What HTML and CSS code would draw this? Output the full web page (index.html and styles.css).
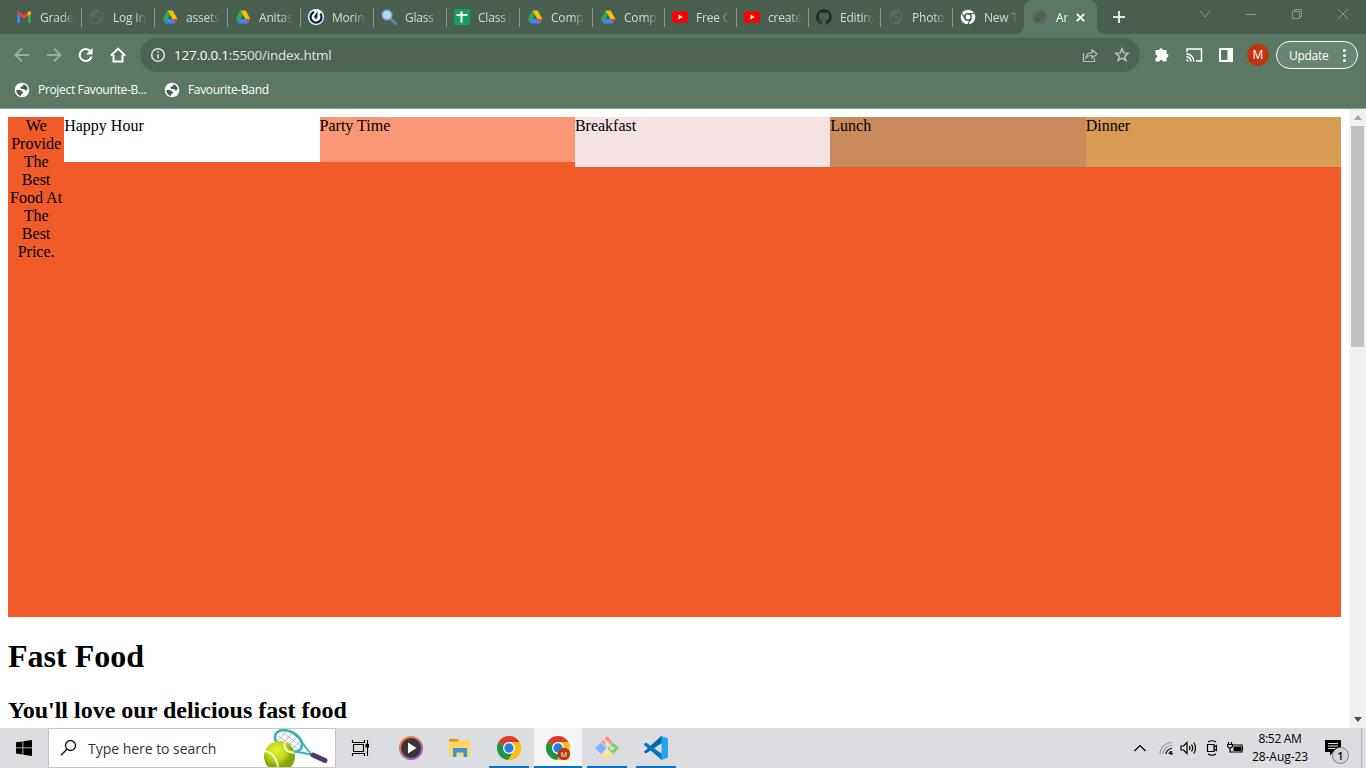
FILE: index.html
```html
<!DOCTYPE html>
<html lang="en">
<head>
<meta charset="utf-8">
<title>Anitas Restaurant</title>
<link rel="stylesheet" href="styles.css">
</head>
<body>
<svg class="defs" aria-hidden="true">
  <symbol id="globe" viewBox="0 0 16 16"><circle cx="8" cy="8" r="7.300" fill="currentColor"/><path class="land" d="M2.200 8 5.800 8Q7.400 8.200 8 9.500 9.300 9.700 9 11 8.600 12 7.200 12L7 13.900Q2.600 13 2.200 8zM9.600 2.300Q12.900 3.400 13.700 7 12.500 9 11 8.300 10.800 7 8.800 7 6.400 7.200 6.400 5.500 6.600 4.300 8.700 4.200z"/></symbol>
  <symbol id="drive" viewBox="0 0 16 16"><path fill="#fbbc04" d="M5.300 1.500h5.400L15.400 10h-5z"/><path fill="#2da94f" d="M5.300 1.500 8 6.400 5.900 10 3.400 14 .8 10z"/><path class="gap" d="M8 6.400 10.100 10H5.900z"/><path fill="#4285f4" d="M3.400 14.500 5.900 10h9.500l-2.600 4.500z"/><path fill="#4285f4" d="M5.900 10 3.400 14.500 2.500 13 4.300 10z"/><path fill="#ea4335" d="M11.700 10h3.600l-2.500 4.500z"/></symbol>
  <symbol id="youtube" viewBox="0 0 16 16"><rect y="2.500" width="16" height="11" rx="2" fill="#f00"/><path fill="#fff" d="m6.400 5.500 4.200 2.500-4.200 2.500z"/></symbol>
  <symbol id="chrome" viewBox="0 0 24 24"><circle cx="12" cy="12" r="12" fill="#fbc116"/><path fill="#1e9447" d="M12 12 1.600 6A12 12 0 0 0 11 24l6-9z"/><path fill="#dd3b30" d="M12 12 1.600 6a12 12 0 0 1 20.800 0H12z"/><path fill="#fbc116" d="M22.400 6A12 12 0 0 1 11 24l6-9-5-9z"/><circle cx="12" cy="12" r="6" fill="#fff"/><circle cx="12" cy="12" r="4.700" fill="#2b7ce9"/></symbol>
</svg>
<div class="browser">
  <header class="tabstrip">
    <div class="tab"><svg class="fav" viewBox="0 0 16 16"><path fill="#4285f4" d="M1 4.500 4 6.800V14H2q-1 0-1-1z"/><path fill="#34a853" d="M12 6.800 15 4.500V13q0 1-1 1h-2z"/><path fill="#ea4335" d="M1 4.400Q1 2.200 3 2.300L8 6l5-3.700L12 6.800 8 10 4 6.800z"/><path fill="#fbbc04" d="M12 3q3-1.800 3 1.200v.6l-3 2.400z"/></svg><span>Grade</span></div>
    <div class="tab dim"><svg class="fav"><use href="#globe"/></svg><span>Log In</span></div>
    <div class="tab"><svg class="fav"><use href="#drive"/></svg><span>assets</span></div>
    <div class="tab"><svg class="fav"><use href="#drive"/></svg><span>Anitas</span></div>
    <div class="tab"><svg class="fav" viewBox="0 0 16 16"><circle cx="8" cy="8" r="8" fill="#fff"/><path fill="none" stroke="#12264f" stroke-width="2.400" d="M6.200 2.900A5.500 5.500 0 1 0 12.300 4.600"/><path fill="#12264f" d="M9.500 2v6.200q-.4 1.800-2 1.500-1.500-.5-1.200-2.400z"/></svg><span>Morin</span></div>
    <div class="tab"><svg class="fav" viewBox="0 0 16 16"><path d="m9.500 9.500 5 5" stroke="#71839b" stroke-width="3" stroke-linecap="round"/><circle cx="6" cy="6" r="5" fill="#add8f7" stroke="#7d98b8" stroke-width="1.300"/></svg><span>Glass F</span></div>
    <div class="tab"><svg class="fav" viewBox="0 0 16 16"><rect width="16" height="16" rx="1" fill="#12a05c"/><path d="M2.500 6h11M7.500 2.500v11" stroke="#fff" stroke-width="2"/></svg><span>Class R</span></div>
    <div class="tab"><svg class="fav"><use href="#drive"/></svg><span>Comp</span></div>
    <div class="tab narrow"><svg class="fav"><use href="#drive"/></svg><span>Comp</span></div>
    <div class="tab narrow"><svg class="fav"><use href="#youtube"/></svg><span>Free C</span></div>
    <div class="tab narrow"><svg class="fav"><use href="#youtube"/></svg><span>create</span></div>
    <div class="tab narrow"><svg class="fav" viewBox="0 0 16 16"><path fill="#24292f" d="M8 0a8 8 0 0 0-2.500 15.600c.4.100.5-.2.500-.4v-1.500c-2.200.5-2.700-1-2.700-1-.4-.9-.9-1.200-.9-1.200-.7-.5.100-.5.100-.5.800.100 1.200.8 1.200.8.700 1.300 1.900.9 2.300.7.100-.5.300-.9.500-1.100-1.800-.2-3.600-.9-3.600-4 0-.9.300-1.600.8-2.100-.1-.2-.4-1 .1-2.100 0 0 .7-.2 2.200.8a7.500 7.500 0 0 1 4 0c1.500-1 2.200-.8 2.200-.8.400 1.100.200 1.900.100 2.100.500.500.800 1.200.800 2.100 0 3.100-1.900 3.700-3.700 3.900.300.300.600.800.600 1.500v2.300c0 .200.100.500.600.400A8 8 0 0 0 8 0z"/></svg><span>Editing</span></div>
    <div class="tab narrow dim"><svg class="fav"><use href="#globe"/></svg><span>Photo</span></div>
    <div class="tab narrow last"><svg class="fav" viewBox="0 0 16 16"><circle cx="8" cy="8" r="7.300" fill="#fff"/><circle cx="8" cy="8" r="3.200" fill="none" stroke="#485f4f" stroke-width="1.500"/><path d="M8 4.600h6.400M5 9.800 1.800 4.200M11 9.800 8 15.300" stroke="#485f4f" stroke-width="1.300"/></svg><span>New T</span></div>
    <div class="tab active dim"><svg class="fav"><use href="#globe"/></svg><span>An</span><svg class="close" viewBox="0 0 9 9"><path d="m.8.800 7.400 7.400m0-7.400L.800 8.200"/></svg></div>
    <svg class="newtab" viewBox="0 0 12 12"><path d="M6 0v12M0 6h12"/></svg>
    <div class="winctl">
      <svg viewBox="0 0 12 12"><path d="m1 3 5 6 5-6"/></svg>
      <svg viewBox="0 0 12 12"><path d="M1 6.500h10"/></svg>
      <svg viewBox="0 0 12 12"><path d="M1.500 3.500h7v7h-7zM3.500 3.500v-2h7v7h-2"/></svg>
      <svg viewBox="0 0 12 12"><path d="m1 1 10 10m0-10L1 11"/></svg>
    </div>
  </header>
  <div class="toolbar">
    <svg class="nav off" viewBox="0 0 16 16"><path d="M15 8H2m6-6.500L1.500 8 8 14.500"/></svg>
    <svg class="nav off" viewBox="0 0 16 16"><path d="M1 8h13M8 1.500 14.500 8 8 14.500"/></svg>
    <svg class="nav" viewBox="0 0 16 16"><path class="bold" d="M12.300 4.200A6 6 0 1 0 13.500 9.500"/><path fill="#fff" stroke="none" d="M14.500 1v6.500H8z"/></svg>
    <svg class="nav" viewBox="0 0 16 16"><path class="bold" d="M3.500 8v6.500h9V8M.8 8.800 8 1.600l7.200 7.200"/></svg>
    <div class="omnibox">
      <svg class="info" viewBox="0 0 16 16"><circle cx="8" cy="8" r="6.300"/><path d="M8 7.200v4.300M8 4.200v1.600"/></svg>
      <span class="url"><b>127.0.0.1</b>:5500/index.html</span>
      <svg class="oicon" viewBox="0 0 16 16"><path d="M1.500 6v8.500h11v-3M4 11q.5-5.200 6-5.400V2.800L15 7l-5 4.200V8.500Q6 8.300 4 11z"/></svg>
      <svg class="oicon star" viewBox="0 0 16 16"><path d="m8 1.800 1.700 4.100 4.500.4-3.400 2.900 1 4.300L8 11.200l-3.800 2.300 1-4.300-3.400-2.900 4.500-.4z"/></svg>
    </div>
    <svg class="ext" viewBox="0 0 16 16"><path fill="#fff" d="M5.200 3a1.800 1.800 0 0 1 3.600 0H12.500v3.700a2 2 0 0 1 0 4V14.500H9a1.800 1.800 0 0 0-3.600 0H1.500V11a1.800 1.800 0 0 0 0-3.600V3z"/></svg>
    <svg class="ext cast" viewBox="0 0 18 16"><path d="M2 5V2h14.500v12H11M1.500 12.800a2 2 0 0 1 1.500 1.700M1.500 9.800A5 5 0 0 1 6 14.500M1.500 6.800A8 8 0 0 1 9 14.500"/></svg>
    <svg class="ext side" viewBox="0 0 16 16"><path fill="#fff" fill-rule="evenodd" d="M1 1h14v14H1zM3 3v10h6.500V3z"/></svg>
    <div class="avatar">M</div>
    <div class="update"><span>Update</span><i></i></div>
  </div>
  <div class="bookmarks">
    <div class="bm"><svg><use href="#globe"/></svg><span>Project Favourite-B...</span></div>
    <div class="bm"><svg><use href="#globe"/></svg><span>Favourite-Band</span></div>
  </div>
  <main class="viewport">
    <div class="page">
      <section class="hero">
        <div class="intro">We Provide The Best Food At The Best Price.</div>
        <div class="card happy">Happy Hour</div>
        <div class="card party">Party Time</div>
        <div class="card breakfast">Breakfast</div>
        <div class="card lunch">Lunch</div>
        <div class="card dinner">Dinner</div>
      </section>
      <h1>Fast Food</h1>
      <h2>You'll love our delicious fast food</h2>
    </div>
    <div class="scrollbar"><i class="up"></i><div class="thumb"></div><i class="down"></i></div>
  </main>
</div>
<footer class="taskbar">
  <div class="start"><svg viewBox="0 0 16 16"><path d="M0 2.300 6.500 1.400v6.100H0zM7.300 1.300 16 0v7.500H7.300zM0 8.300h6.500v6.200L0 13.600zM7.300 8.300H16V16l-8.700-1.300z"/></svg></div>
  <div class="search">
    <svg class="lens" viewBox="0 0 18 18"><circle cx="10.500" cy="6.500" r="5"/><path d="M6.900 10.200 1 16.200"/></svg>
    <span>Type here to search</span>
    <svg class="tennis" viewBox="0 0 64 38">
      <defs><radialGradient id="ball" cx=".4" cy=".3"><stop offset="0" stop-color="#e2f235"/><stop offset=".65" stop-color="#bdd514"/><stop offset="1" stop-color="#87a50c"/></radialGradient></defs>
      <g fill="none"><path d="M14 7 34 20M18 3 37 17M25 2 37 11M12 13l11-11M16 17 30 3M21 20 34 7M27 22 37 11" stroke="#b8aec8" stroke-width=".9"/><ellipse cx="24.500" cy="12" rx="14.500" ry="9.500" transform="rotate(29 24.500 12)" stroke="#35b4b4" stroke-width="2.600"/><path d="M36 10q4 7 12 16M30 23q8 0 18 3" stroke="#35b4b4" stroke-width="1.800"/><path d="m49 26 12 5.500" stroke="#553869" stroke-width="5" stroke-linecap="round"/></g>
      <circle cx="15.500" cy="27.500" r="15.500" fill="url(#ball)"/><path d="M1 22q11 2 13 16M21 13q-3 9 9.500 11" fill="none" stroke="#f4f8d0" stroke-width="2"/>
    </svg>
  </div>
  <div class="tbtn first"><svg class="taskview" viewBox="0 0 18 18"><path d="M2.500 5.500h10v7h-10zM1.500 1v2.500h12V1M1.500 17v-2.500h12V17M16.500 1v16"/><path fill="#000" stroke="none" d="M14.500 5H18v3.500h-3.500z"/></svg></div>
  <div class="tbtn app"><svg viewBox="0 0 24 24"><defs><linearGradient id="ring" x1="0" y1="0" x2=".5" y2="1"><stop offset=".2" stop-color="#f57c3a"/><stop offset="1" stop-color="#9b59c9"/></linearGradient></defs><circle cx="12" cy="12" r="11" fill="#343536" stroke="url(#ring)" stroke-width="2"/><path fill="#fff" d="m9 6.500 8.500 5.500L9 17.500z"/></svg></div>
  <div class="tbtn app"><svg viewBox="0 0 24 24"><path fill="#d99a10" d="M1 3h9l1.500 3H1z"/><path fill="#ffd661" d="M1 5.500h9L12 4h10v16H1z"/><path fill="#3a96dd" d="M5 12h14v9h-3.500v-4.500h-7V21H5z"/></svg></div>
  <div class="tbtn app run"><svg><use href="#chrome"/></svg></div>
  <div class="tbtn app run current"><svg viewBox="0 0 24 24"><use href="#chrome" width="24" height="24"/><circle cx="18" cy="18" r="6.200" fill="#bf360c"/><text x="18" y="20.700" text-anchor="middle">M</text></svg></div>
  <div class="tbtn app run"><svg viewBox="0 0 24 24"><path fill="#ff8f8f" d="m12 0 5.800 5.800L12 11.500 6.200 5.800z"/><path fill="#80b3ff" d="m5.800 6.500 5.700 5.700-5.700 5.600L0 12.200z"/><path fill="#80d166" d="m18.200 6.500 5.800 5.700-5.800 5.600-5.700-5.600z"/><path fill="#ffe37a" d="m12 12.700 5.800 5.800L12 24l-5.800-5.500z"/><path d="M8.500 3 12 7v10m0-10 5 5.500" fill="none" stroke="#e9e9e9" stroke-width="1.500"/><g fill="#e9e9e9"><circle cx="12" cy="7" r="1.800"/><circle cx="17" cy="12.500" r="1.800"/><circle cx="12" cy="17" r="1.800"/></g></svg></div>
  <div class="tbtn app run"><svg viewBox="0 0 24 24"><path fill="#0878bd" d="M1.800 6.500 18 18.500V24L0 9z"/><path fill="#0067a8" d="M18 0v7L1.800 17.500 0 15.800 17 .3z"/><path fill="#0878bd" d="m.2 8.200 1.900-1.500L18 18v6z"/><path fill="#25a4ee" d="M17.500 0 24 2.500v19L17.500 24z"/></svg></div>
  <div class="tray">
    <svg class="t chev" viewBox="0 0 12 12"><path d="m.5 9 5.500-5.500L11.500 9"/></svg>
    <svg class="t wifi" viewBox="0 0 14 14"><g stroke="#999"><path d="M1 13A12 12 0 0 1 13 1.500M4 13a9 9 0 0 1 9-8.500"/></g><path d="M7 13a6 6 0 0 1 6-5.500M10 13a3 3 0 0 1 3-2.500"/><circle cx="12.300" cy="12.600" r="1.300" fill="#000" stroke="none"/></svg>
    <svg class="t vol" viewBox="0 0 17 14"><path d="M1 5h2.500L7 1.500v11L3.500 9H1zM9.300 5q1.300 2 0 4M11.500 3.500q2.400 3.500 0 7M13.800 1.500q3.500 5.500 0 11"/></svg>
    <svg class="t cam" viewBox="0 0 12 16"><path d="M1.500 4.500h6.500v7H1.500zM8 7 10.500 5.500v5L8 9M2 2Q6-.5 10 2M2 14q4 2.500 8 0"/></svg>
    <svg class="t bat" viewBox="0 0 17 14"><path d="M6 4h9v7H5.500M15.500 6v3M1.500 1v2.500m3-2.500v2.500M.500 3.500H5.500V5.500L3 7.500.500 5.500zM3 7.500V11h2.500"/><path fill="#000" stroke="none" d="M6.500 5.500h7.500v4.500H6.500z"/></svg>
    <div class="clock"><span>8:52 AM</span><span class="date">28-Aug-23</span></div>
    <div class="notif"><svg viewBox="0 0 16 16"><path d="M0 0h16v12H8.500L5 15.500V12H0z"/><path d="M3 3.500h10M3 6h10M3 8.500h7" stroke="#e2e3e5" stroke-width="1.200"/></svg><b>1</b></div>
    <i class="desk"></i>
  </div>
</footer>
</body>
</html>
```
FILE: styles.css
```css
* { box-sizing: border-box; }
body { margin: 0; width: 1366px; height: 768px; overflow: hidden; display: flex; flex-direction: column; background: #fff; font-family: "Open Sans", "Noto Sans", sans-serif; }
svg { display: block; flex: none; }
.defs { position: absolute; width: 0; height: 0; }
.browser { height: 728px; display: flex; flex-direction: column; }

.tabstrip { height: 34px; flex: none; background: #485f4f; display: flex; align-items: center; padding-left: 8px; }
.tab { width: 73px; height: 34px; flex: none; display: flex; align-items: center; padding-left: 8px; position: relative; color: #d5dcd7; font-size: 12px; letter-spacing: -.2px; }
.tab.narrow { width: 72px; }
.tab::after { content: ""; position: absolute; right: -1px; top: 8px; width: 1px; height: 19px; background: #8a9a8f; }
.tab.last::after, .tab.active::after { display: none; }
.tab span { width: 40px; margin-left: 8px; white-space: nowrap; -webkit-mask-image: linear-gradient(90deg, #000 55%, transparent 84%); mask-image: linear-gradient(90deg, #000 55%, transparent 84%); }
.fav { width: 16px; height: 16px; }
.dim .fav { color: #5f6368; }
.land, .gap { fill: #485f4f; }
.active { background: #5b7865; border-radius: 8px 8px 0 0; }
.tab.active { color: #fff; }
.active::before { content: ""; position: absolute; z-index: 1; left: -8px; right: -8px; bottom: 0; height: 8px; background: radial-gradient(circle at 0 0, transparent 7.500px, #5b7865 8px) left / 8px 8px no-repeat, radial-gradient(circle at 100% 0, transparent 7.500px, #5b7865 8px) right / 8px 8px no-repeat; }
.tab.active span { width: 16px; }
.close { width: 9px; height: 9px; margin-left: 4px; stroke: #fff; stroke-width: 1.800; }
.newtab { width: 12px; height: 12px; margin-left: 16px; stroke: #e3e8e4; stroke-width: 2; }
.winctl { margin-left: auto; display: flex; gap: 34px; padding: 0 17px 6px 0; }
.winctl svg { width: 12px; height: 12px; fill: none; stroke: #8b9b90; stroke-width: 1; }

.toolbar { height: 42px; flex: none; background: #5b7865; display: flex; align-items: center; padding: 0 8px 0 14px; }
.nav { width: 16px; height: 16px; margin-right: 16px; fill: none; stroke: #fff; stroke-width: 1.800; }
.nav + .omnibox { margin-left: -2px; }
.off { stroke: #9dada2; }
.bold { stroke-width: 2; }
.omnibox { width: 1000px; height: 34px; flex: none; border-radius: 17px; background: #4d6455; display: flex; align-items: center; padding: 0 10px; }
.info { width: 16px; height: 16px; fill: none; stroke: #dce2de; stroke-width: 1.600; }
.url { margin-left: 8px; flex: 1; font-size: 13.500px; letter-spacing: -.24px; color: #dfe5e1; white-space: nowrap; }
.url b { font-weight: 400; color: #fff; }
.oicon { width: 16px; height: 16px; fill: none; stroke: #b9c4bc; stroke-width: 1.200; }
.star { margin-left: 16px; stroke-width: 1.500; }
.ext { width: 16px; height: 16px; margin-left: 14px; }
.cast { width: 18px; margin-left: 15px; fill: none; stroke: #fff; stroke-width: 1.500; }
.side { margin-left: 15px; }
.avatar { width: 22px; height: 22px; margin-left: 13px; border-radius: 50%; background: #bf360c; color: #fff; font-size: 12px; line-height: 22px; text-align: center; }
.update { width: 82px; height: 28px; margin-left: 7px; border: 1px solid #fff; border-radius: 14px; background: #6a8473; display: flex; align-items: center; padding-left: 12px; color: #fff; font-size: 12px; letter-spacing: -.3px; }
.update span { width: 51px; }
.update i { width: 3px; height: 3px; margin-left: 3px; border-radius: 50%; background: #fff; box-shadow: 0 -5px #fff, 0 5px #fff; }

.bookmarks { height: 33px; flex: none; background: #5b7865; border-bottom: 1px solid #8da093; display: flex; align-items: center; padding: 0 0 5px 14px; color: #fff; font-size: 12px; letter-spacing: -.33px; }
.bm { width: 150px; display: flex; align-items: center; gap: 8px; white-space: nowrap; }
.bm svg { width: 16px; height: 16px; }

.viewport { flex: 1; display: flex; overflow: hidden; background: #fff; }
.page { width: 1349px; padding: 8px; font-family: "Liberation Serif", serif; font-size: 16px; line-height: 18px; color: #000; }
.hero { width: 1333px; height: 500px; background: #f15b2a; display: flex; align-items: flex-start; }
.intro { width: 56.200px; flex: none; text-align: center; }
.card { flex: 1; height: 50px; }
.happy { height: 45px; background: #fff; }
.party { height: 45px; background: #f99776; }
.breakfast { background: #f5e2e3; }
.lunch { background: #c98a5e; }
.dinner { background: #d99c55; }
h1, h2 { line-height: normal; font-weight: 700; }
h1 { font-size: 32px; margin: 21px 0 22px; }
h2 { font-size: 24px; margin: 0; }
.scrollbar { width: 17px; background: #f1f1f1; display: flex; flex-direction: column; align-items: center; padding: 6px 0; }
.thumb { width: 13px; height: 221px; margin-top: 6px; background: #c1c1c1; }
.up, .down { border: 4px solid transparent; }
.up { border-top: 0; border-bottom: 5px solid #a3a3a3; }
.down { border-bottom: 0; border-top: 5px solid #505050; margin-top: auto; }

.taskbar { height: 40px; display: flex; background: #dcdde0; }
.start { width: 48px; display: flex; align-items: center; justify-content: center; }
.start svg { width: 16px; height: 16px; }
.search { width: 288px; background: #fff; border: 1px solid #c6c6c6; display: flex; align-items: center; padding-left: 11px; font-size: 14px; letter-spacing: -.03px; color: #333; }
.search span { width: 176px; margin-left: 10px; white-space: nowrap; }
.lens { width: 18px; height: 18px; fill: none; stroke: #111; stroke-width: 1.300; }
.tennis { width: 64px; height: 38px; }
.tbtn { width: 48px; margin-right: 1px; display: flex; align-items: center; justify-content: center; }
.first { margin-right: 3px; }
.app svg { width: 24px; height: 24px; }
.taskview { width: 18px; height: 18px; fill: none; stroke: #000; stroke-width: 1.100; }
.run { position: relative; }
.run::after { content: ""; position: absolute; bottom: 0; left: 4px; right: 4px; height: 2px; background: #0b72cc; }
.current { background: #f4f4f4; }
.current::after { left: 0; right: 0; }
.current text { font: 7px "Open Sans", sans-serif; fill: #fff; }
.tray { margin-left: auto; display: flex; align-items: center; }
.t { fill: none; stroke: #000; stroke-width: 1.200; }
.chev { width: 12px; height: 12px; margin-right: 13px; }
.wifi { width: 14px; height: 14px; margin-right: 7px; }
.vol { width: 17px; height: 14px; margin-right: 9px; }
.cam { width: 12px; height: 16px; margin-right: 9px; }
.bat { width: 17px; height: 14px; margin-right: 6px; }
.clock { width: 60px; margin-right: 15px; display: flex; flex-direction: column; align-items: center; font-size: 12px; line-height: 18px; letter-spacing: -.3px; color: #000; white-space: nowrap; }
.date { letter-spacing: -.05px; }
.notif { width: 24px; position: relative; }
.notif svg { width: 16px; height: 16px; }
.notif b { position: absolute; left: 7px; top: 7px; width: 17px; height: 17px; border: 1px solid #777; border-radius: 50%; background: #d5d6d8; font-size: 11px; line-height: 15px; text-align: center; font-weight: 600; }
.desk { width: 1px; height: 40px; margin: 0 4px 0 12px; background: #b0b1b3; }
```
